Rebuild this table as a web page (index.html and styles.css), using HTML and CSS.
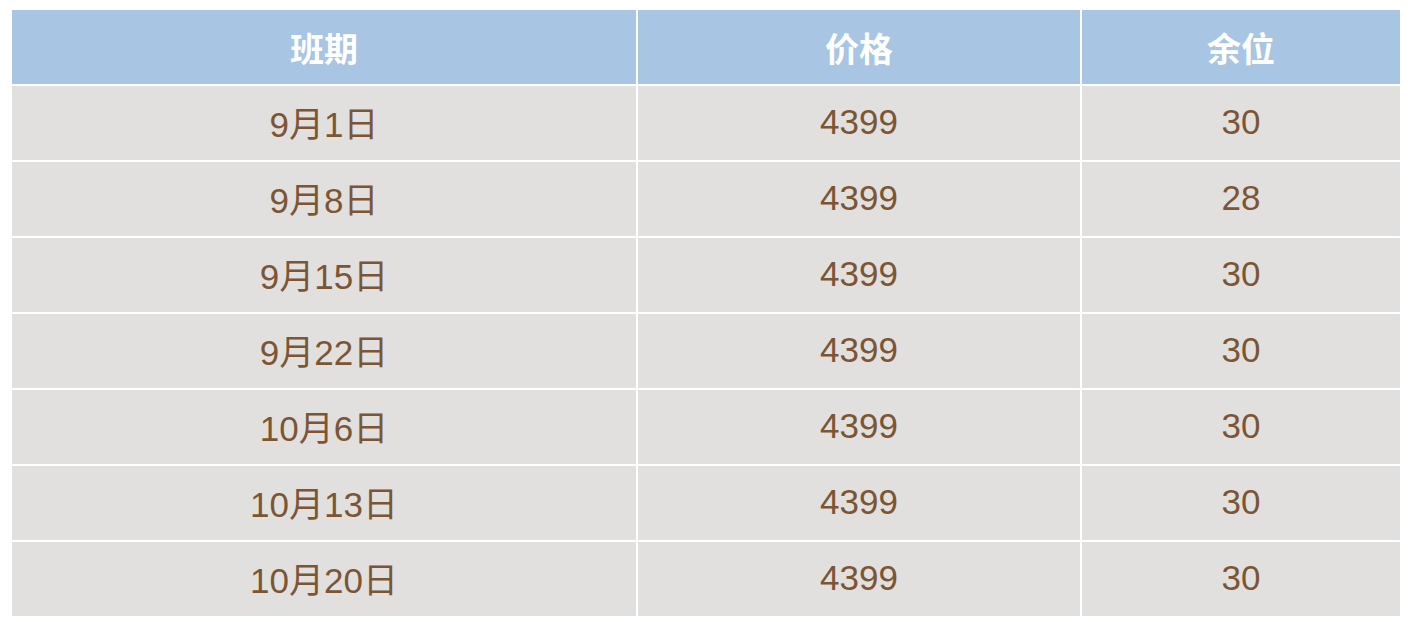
FILE: index.html
```html
<!DOCTYPE html>
<html lang="zh-CN">
<head>
<meta charset="utf-8">
<title>班期</title>
<link rel="stylesheet" href="styles.css">
</head>
<body>
<div class="schedule">
  <div class="cell head">班期</div><div class="cell head">价格</div><div class="cell head">余位</div>
  <div class="cell">9月1日</div><div class="cell">4399</div><div class="cell">30</div>
  <div class="cell">9月8日</div><div class="cell">4399</div><div class="cell">28</div>
  <div class="cell">9月15日</div><div class="cell">4399</div><div class="cell">30</div>
  <div class="cell">9月22日</div><div class="cell">4399</div><div class="cell">30</div>
  <div class="cell">10月6日</div><div class="cell">4399</div><div class="cell">30</div>
  <div class="cell">10月13日</div><div class="cell">4399</div><div class="cell">30</div>
  <div class="cell">10月20日</div><div class="cell">4399</div><div class="cell">30</div>
</div>
</body>
</html>
```
FILE: styles.css
```css
html, body {
  margin: 0;
  padding: 0;
  background: #ffffff;
}
.schedule {
  display: grid;
  grid-template-columns: 624px 442px 318px;
  grid-auto-rows: 74px;
  gap: 2px;
  margin: 10px 0 0 12px;
  width: 1388px;
  font-family: "Liberation Sans", Arial, "Noto Sans CJK SC", sans-serif;
}
.cell {
  display: flex;
  align-items: center;
  justify-content: center;
  padding-bottom: 3px;
  box-sizing: border-box;
  background: #e1e0df;
  color: #7b5534;
  font-size: 35px;
}
.head {
  padding-bottom: 0;
  background: #a8c5e3;
  color: #ffffff;
  font-weight: bold;
  font-family: "Noto Sans CJK SC", sans-serif;
  font-size: 34px;
}
```
